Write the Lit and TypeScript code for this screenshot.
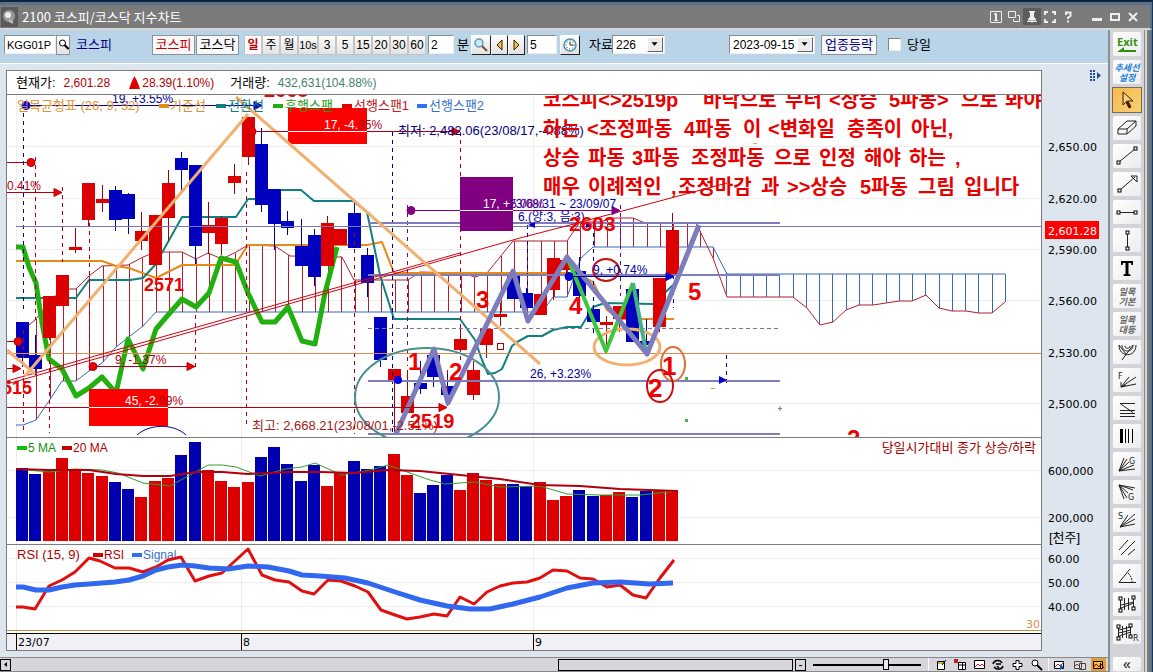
import { LitElement, html, svg, css } from "lit";
import { customElement, state } from "lit/decorators.js";
import { classMap } from "lit/directives/class-map.js";

type Pt = [number, number];
// [up?, body top, body bottom, wick top, wick bottom]
type Candle = [number, number, number, number, number];

const FIRST = 22;
const STEP = 13.27;
const cx = (i: number) => Math.round(FIRST + STEP * i);

const candles: Candle[] = [
  [0, 322, 358, 322, 367], [0, 355, 369, 335, 375], [1, 296, 338, 296, 338], [1, 275, 306, 275, 306],
  [1, 247, 250, 228, 253], [1, 183, 220, 183, 226], [1, 199, 203, 185, 212], [0, 190, 220, 186, 231],
  [0, 194, 219, 193, 234], [1, 231, 241, 212, 250], [1, 215, 265, 215, 265], [1, 183, 218, 170, 241],
  [0, 158, 170, 152, 192], [0, 165, 246, 165, 264], [1, 225, 233, 202, 254], [1, 218, 244, 216, 255],
  [1, 176, 183, 164, 194], [1, 117, 157, 117, 165], [0, 144, 205, 128, 212], [0, 189, 224, 189, 250],
  [0, 221, 228, 211, 235], [0, 246, 266, 219, 266], [0, 235, 277, 229, 286], [1, 223, 266, 216, 266],
  [1, 229, 245, 229, 245], [0, 213, 248, 203, 248], [0, 255, 283, 248, 297], [0, 317, 360, 317, 367],
  [1, 369, 380, 369, 434], [1, 396, 413, 370, 413], [0, 383, 389, 361, 394], [0, 355, 377, 350, 387],
  [0, 386, 395, 373, 404], [1, 339, 350, 327, 350], [1, 370, 395, 361, 400], [1, 329, 345, 329, 358],
  [1, 314, 317, 303, 326], [0, 275, 299, 270, 299], [0, 293, 308, 288, 320], [1, 294, 315, 294, 315],
  [1, 258, 290, 258, 300], [1, 260, 270, 258, 275], [0, 271, 296, 257, 312], [0, 309, 322, 309, 322],
  [1, 322, 325, 316, 353], [1, 306, 319, 306, 332], [0, 289, 342, 289, 342], [0, 341, 345, 319, 345],
  [1, 278, 327, 278, 332], [1, 230, 274, 213, 274],
];

// Top of each volume bar; its colour follows the candle of the same day.
const volumes = [
  468, 474, 470, 458, 469, 473, 476, 482, 489, 497, 481, 478, 455, 442, 470, 481, 487, 482, 457, 447,
  464, 481, 465, 486, 472, 461, 469, 466, 454, 475, 493, 485, 475, 490, 473, 480, 484, 484, 486, 482,
  500, 496, 490, 496, 495, 492, 497, 491, 491, 490,
];

const lagging: Pt[] = [[16, 247], [23, 247], [29, 267], [36, 283], [42, 323], [49, 359], [62, 369], [76, 396], [89, 388], [102, 377], [116, 393], [128, 339], [143, 369], [156, 329], [168, 315], [182, 299], [196, 307], [209, 293], [221, 258], [236, 262], [248, 293], [262, 322], [275, 322], [288, 307], [302, 341], [315, 344], [325, 293], [337, 247]];
const conversion: Pt[] = [[16, 298], [76, 298], [89, 280], [130, 280], [143, 278], [155, 265], [163, 251], [182, 217], [236, 217], [248, 199], [262, 199], [272, 190], [301, 190], [314, 201], [353, 201], [367, 212], [380, 275], [394, 319], [460, 319], [475, 340], [482, 360], [488, 374], [495, 373], [502, 369], [512, 346], [517, 342], [528, 336], [542, 336], [553, 330], [567, 327], [581, 327], [593, 307], [605, 303], [653, 304], [673, 285]];
const base: Pt[] = [[16, 261], [102, 261], [116, 266], [129, 268], [156, 278], [182, 265], [235, 265], [248, 245], [367, 245], [382, 242], [394, 273], [568, 273], [587, 279], [593, 282], [607, 310], [620, 319], [674, 319]];
const spanA: Pt[] = [[29, 325], [35, 320], [48, 304], [62, 289], [76, 289], [89, 276], [102, 266], [128, 265], [143, 257], [156, 252], [182, 252], [196, 259], [208, 253], [222, 259], [236, 252], [248, 245], [275, 246], [290, 256], [342, 257], [354, 280], [408, 280], [420, 272], [462, 273], [475, 277], [487, 273], [500, 257], [513, 241], [567, 241], [580, 222], [600, 222], [613, 218], [633, 218], [645, 223], [696, 223], [713, 258], [727, 297], [793, 297], [807, 308], [820, 325], [833, 322], [846, 310], [859, 305], [873, 305], [899, 301], [912, 301], [926, 295], [939, 308], [952, 311], [966, 311], [979, 313], [992, 313], [1005, 302]];
const spanB: Pt[] = [[16, 425], [23, 425], [36, 420], [49, 401], [62, 381], [76, 381], [89, 371], [102, 363], [116, 347], [143, 326], [156, 312], [542, 312], [553, 297], [567, 297], [581, 258], [593, 247], [713, 247], [727, 274], [1005, 274]];
const wave: Pt[] = [[396, 434], [434, 349], [448, 403], [513, 271], [528, 321], [567, 257], [647, 354], [699, 225]];

const ma20: Pt[] = [[16, 469], [49, 470], [89, 470], [116, 474], [143, 476], [170, 476], [196, 472], [222, 472], [248, 474], [290, 472], [320, 472], [355, 473], [388, 470], [420, 471], [460, 475], [500, 479], [540, 485], [580, 486], [620, 489], [678, 491]];
const ma5: Pt[] = [[16, 469], [49, 472], [75, 469], [102, 470], [118, 473], [143, 483], [170, 486], [190, 475], [208, 465], [222, 465], [236, 467], [260, 476], [285, 469], [302, 467], [315, 463], [342, 475], [370, 470], [388, 465], [410, 473], [430, 480], [445, 484], [475, 482], [500, 487], [540, 486], [567, 494], [600, 495], [640, 495], [678, 491]];
const rsi: Pt[] = [[16, 607], [23, 607], [35, 609], [49, 586], [62, 580], [75, 572], [89, 558], [100, 561], [115, 568], [129, 568], [143, 572], [156, 567], [168, 560], [181, 557], [195, 581], [209, 576], [222, 573], [236, 560], [248, 549], [262, 575], [275, 580], [289, 582], [302, 591], [314, 594], [328, 580], [341, 581], [355, 586], [368, 592], [381, 610], [395, 615], [407, 619], [420, 617], [434, 614], [447, 616], [460, 597], [474, 604], [487, 592], [500, 586], [513, 583], [527, 582], [540, 578], [553, 570], [567, 571], [580, 578], [593, 579], [607, 587], [620, 585], [633, 595], [646, 598], [660, 578], [674, 560]];
const signal: Pt[] = [[16, 587], [23, 587], [36, 590], [49, 590], [62, 587], [75, 585], [89, 584], [115, 582], [129, 580], [143, 576], [156, 570], [168, 567], [182, 565], [195, 566], [209, 568], [228, 569], [248, 566], [268, 567], [289, 571], [302, 575], [320, 576], [345, 578], [368, 583], [395, 592], [420, 600], [447, 606], [470, 609], [490, 609], [513, 604], [540, 597], [567, 588], [593, 583], [620, 582], [650, 584], [673, 583]];

const notes: { y: number; words: [number, string][] }[] = [
  { y: 107, words: [[543, "코스피<>2519p"], [703, "바닥으로"], [785, "부터"], [829, "<상승"], [889, "5파동>"], [961, "으로"], [1005, "봐야"]] },
  { y: 136, words: [[543, "하는"], [587, "<조정파동"], [684, "4파동"], [743, "이"], [768, "<변화일"], [847, "충족이"], [911, "아닌,"]] },
  { y: 165, words: [[543, "상승"], [588, "파동"], [632, "3파동"], [691, "조정파동"], [774, "으로"], [819, "인정"], [864, "해야"], [909, "하는"], [955, ","]] },
  { y: 194, words: [[543, "매우"], [588, "이례적인"], [671, ","], [678, "조정마감"], [761, "과"], [787, ">>상승"], [860, "5파동"], [918, "그림"], [964, "입니다"]] },
];

const marks: [number, number, number, string][] = [
  [264, 97, 20, "2668"], [144, 291, 18, "2571"], [-8, 394, 18, "2515"], [410, 428, 20, "2519"], [569, 231, 21, "2603"],
  [408, 370, 24, "1"], [449, 380, 24, "2"], [476, 308, 24, "3"], [569, 314, 24, "4"], [688, 300, 24, "5"],
  [662, 375, 26, "1"], [648, 397, 26, "2"], [847, 447, 24, "2"],
];

const line = (pts: Pt[]) => pts.map((p) => p.join(",")).join(" ");

function at(pts: Pt[], x: number): number {
  for (let i = 1; i < pts.length; i++) {
    if (x <= pts[i][0]) {
      const [x0, y0] = pts[i - 1];
      const [x1, y1] = pts[i];
      return y0 + ((y1 - y0) * (x - x0)) / (x1 - x0);
    }
  }
  return pts[pts.length - 1][1];
}

const hatch = Array.from({ length: 74 }, (_, k) => cx(k + 1) + 1)
  .filter((x) => x <= 1006)
  .map((x) => ({ x, a: Math.round(at(spanA, x)), b: Math.round(at(spanB, x)) }));

const dash = (x: number, y1: number, y2: number, cls: string) =>
  svg`<line class="dash ${cls}" x1=${x + 0.5} x2=${x + 0.5} y1=${y1} y2=${y2}></line>`;

const ray = (x1: number, x2: number, y: number, cls: string, start: boolean, end: boolean) => svg`
  <g class=${cls}>
    <line x1=${x1} x2=${x2} y1=${y + 0.5} y2=${y + 0.5}></line>
    ${start ? svg`<circle cx=${x1} cy=${y + 0.5} r="4"></circle>` : ""}
    ${end ? svg`<path d="M${x2 + 3} ${y + 0.5}l-8-4v8z"></path>` : ""}
  </g>`;

const k = (d: string) => svg`<path class="k" d=${d}></path>`;
const sq = (x: number, y: number) => svg`<rect class="sq" x=${x - 1.5} y=${y - 1.5} width="3" height="3"></rect>`;

const tools: { name: string; art: unknown }[] = [
  { name: "Exit", art: svg`<text class="exit" x="4" y="14">Exit</text><path fill="#2f9010" d="M4 20l7-5v3h12v2z"></path>` },
  { name: "추세선 설정", art: svg`<text class="tr" x="14" y="11">추세선</text><text class="tr" x="14" y="21">설정</text>` },
  { name: "선택", art: svg`<path d="M10 4v13l3-3 3 6 2-1-3-6h5z" fill="#f8d080" stroke="#3a1a00"></path><path d="M14 12l4 7-2 1-3-6z" fill="#3a1a00"></path>` },
  { name: "지우개", art: svg`${k("M5 13l9-8h9l-9 8zM5 13v5h9v-5M14 18l9-8V5")}` },
  { name: "추세선", art: svg`${k("M6 18L22 5")}${sq(5.5, 18.5)}${sq(22.5, 4.5)}` },
  { name: "화살표", art: svg`${k("M7 18L22 5M18 4h6v6zM18 4l6 6")}${sq(6.5, 18.5)}` },
  { name: "수평선", art: svg`${k("M6 12.5h16")}${sq(5.5, 12.5)}${sq(22.5, 12.5)}` },
  { name: "수직선", art: svg`${k("M14.5 5v15")}${sq(14.5, 4.5)}${sq(14.5, 20.5)}` },
  { name: "문자", art: svg`<path d="M8 5h12v4h-1.500l-.6-2H15.500v11l2 .6V20h-7v-1.400l2-.6V7h-2.400l-.6 2H8z"></path>` },
  { name: "일목기본", art: svg`<text class="ic" x="14" y="11">일목</text><text class="ic" x="14" y="21">기본</text>` },
  { name: "일목대등", art: svg`<text class="ic" x="14" y="11">일목</text><text class="ic" x="14" y="21">대등</text>` },
  { name: "피보나치 원", art: svg`${k("M9 20L20 5M6 5c0 13 17 13 17 0M9 5c0 8 11 8 11 0M12 6c0 3 5 3 5 0M6 5l7 9")}` },
  { name: "피보나치 팬", art: svg`${k("M8 19L16 9M8 19l15-10M8 19l15-3M8 19v-5M8 19l5-2")}<text class="lt" x="5" y="11">F</text>` },
  { name: "되돌림", art: svg`${k("M7 7.500h15M7 7.500l13 9M7 14.500h15M7 17.500h15M7 20.500h15")}` },
  { name: "시간대", art: svg`<path d="M7 5h3v14H7zM12 5h1v14h-1zM15 5h1v14h-1zM19 5h1v14h-1z"></path>` },
  { name: "갠 팬 상승", art: svg`${k("M6 19L11 6M6 19l8-12M6 19l10-9M6 19l15-6M6 19l16-2")}<text class="lt" x="16" y="12">G</text>` },
  { name: "갠 팬 하락", art: svg`${k("M6 5l5 14M6 5l8 13M6 5l9 8M6 5l14 5M6 5l16 3")}<text class="lt" x="15" y="20">G</text>` },
  { name: "스피드 라인", art: svg`${k("M7 19L15 7M7 19L22 6M7 19l15-8M7 19l15-3")}<text class="lt" x="5" y="11">S</text>` },
  { name: "평행선", art: svg`${k("M6 14L15 4M8 19L22 5M15 19l7-6")}` },
  { name: "각도", art: svg`${k("M6 18.500h17M6 18.500L17 5")}<path class="k" stroke-dasharray="2 1" d="M15 9c3 3 4 6 4 9"></path>` },
  { name: "채널", art: svg`${k("M7.500 7v11M11.500 6v12M15.500 6v12M20.500 6v10M8 13l13-3M8 16l13-5")}${sq(7.500, 6.500)}${sq(7.500, 18.500)}${sq(20.500, 5.500)}${sq(20.500, 16.500)}` },
  { name: "회귀 채널", art: svg`${k("M5.500 7v11M9.500 6v12M13.500 6v12M17.500 6v10M6 10l12-3M6 13l12-3M6 16l12-4")}${sq(5.500, 6.500)}${sq(5.500, 18.500)}${sq(17.500, 5.500)}${sq(17.500, 16.500)}<text class="lt" x="20" y="21">R</text>` },
];

const periods = ["일", "주", "월", "10s", "3", "5", "15", "20", "30", "60"];

const windowIcons: { name: string; art: unknown; cls: string }[] = [
  { name: "화면번호", cls: "", art: svg`<path fill="none" d="M2.500 2.500h11v11h-11z"></path><path class="f" d="M7 4h2v7h1v1H6v-1h1V6H6V5z"></path>` },
  { name: "복사", cls: "", art: svg`<path fill="none" d="M2.500 2.500h7v6h-7zM11 6.500h2.500v6h-6V10"></path>` },
  { name: "고정", cls: "pin", art: svg`<path class="f" d="M5 2h6v1.500h-1V8l2 2v1.500H4V10l2-2V3.500H5zM3 12h10v1H3zM7.500 11h1v3h-1z"></path>` },
  { name: "전체화면", cls: "", art: svg`<path fill="none" stroke-width="2" d="M3 6V3h3M10 3h3v3M3 10v3h3M10 13h3v-3"></path>` },
  { name: "도움말", cls: "", art: svg`<path fill="none" stroke-width="2" d="M6 6V3.500h4.500V7L8 8.500V10M8 11.500v2"></path>` },
  { name: "최소화", cls: "gap", art: svg`<path class="f" d="M3 9h10v3H3z"></path>` },
  { name: "최대화", cls: "", art: svg`<path fill="none" stroke-width="2" d="M4 5h8v6H4z"></path>` },
  { name: "닫기", cls: "", art: svg`<path fill="none" stroke-width="2" d="M4 4l8 8M12 4l-8 8"></path>` },
];

const bottomIcons: { name: string; cls: string; art: unknown }[] = [
  { name: "저장", cls: "", art: svg`<path fill="#fff" stroke="#000" d="M3.500 3.500h7v8h-7z"></path><path d="M4 4h6v2H4z" fill="#c8b030"></path><path stroke="#000" d="M8 7l4-5"></path>` },
  { name: "불러오기", cls: "", art: svg`<path fill="#fff" stroke="#000" d="M5.500 4.500h7v7h-7zM5 7h7M9.500 5v6"></path><path d="M1 1h4v4H1z" fill="#c02020"></path>` },
  { name: "차트", cls: "", art: svg`<path fill="#fff" stroke="#000" d="M2.500 2.500h10v8h-10z"></path><path fill="none" stroke="#c02020" d="M3 9l3-3 2 2 2-2 2 2"></path>` },
  { name: "새로고침", cls: "", art: svg`<path fill="none" stroke="#000" stroke-width="1.500" d="M2 6c1-4 7-5 9-1M12 8c-1 4-7 4-9 1M5 6h5M6 8l2 2"></path>` },
  { name: "십자선", cls: "", art: svg`<path fill="#fff" stroke="#000" d="M6 2.500h3v3h3v3H9v3H6v-3H3v-3h3z"></path>` },
  { name: "확대", cls: "", art: svg`<circle cx="6" cy="5" r="3" fill="#fff" stroke="#000"></circle><path stroke="#000" stroke-width="2" d="M8 7l5 5"></path>` },
  { name: "차트 추가", cls: "sep", art: svg`<path fill="#fff" stroke="#000" d="M2.500 3.500h9v7h-9z"></path><path fill="none" stroke="#c02020" d="M3 9l3-3 2 2 3-3"></path><path d="M8 6v6l4-3z" fill="#2050c0"></path>` },
  { name: "차트 복사", cls: "", art: svg`<path fill="#ddd" stroke="#444" d="M2.500 3.500h7v7h-7zM7.500 5.500h6v6h-6z"></path><path fill="none" stroke="#c02020" d="M3 8l2-2 2 2"></path>` },
  { name: "차트 잠금", cls: "on", art: svg`<path fill="#f8c030" stroke="#000" d="M2.500 3.500h9v7h-9z"></path><path fill="none" stroke="#900" d="M2 10l3-4 3 3 2-3 3 4"></path><path stroke="#000" d="M9.500 5v6"></path>` },
];

@customElement("app-root")
export class AppRoot extends LitElement {
  @state() private period = "일";
  @state() private tool = 2;

  static styles = css`
    :host { display: block; --ui: "Liberation Sans", "Noto Sans CJK KR", sans-serif; font: 12px/16px var(--ui); color: #000; }
    * { box-sizing: border-box; }
    button, input, select { font: inherit; color: inherit; margin: 0; padding: 0; border-radius: 0; }
    button { display: flex; align-items: center; justify-content: center; white-space: nowrap; }
    svg { display: block; }
    .window { display: flex; flex-direction: column; min-height: 100vh; background: #dde5ee; border-top: 2px solid #0d2340; border-right: 1px solid #17365a; }
    .title { display: flex; align-items: center; height: 28px; background: #7b7b7b; border-top: 3px solid #5c7189; border-bottom: 2px solid #d8d6d0; border-right: 2px solid #55738c; padding: 0 8px 0 1px; }
    .title h1 { margin: 0; flex: 1; padding-left: 4px; font: 13px/20px "Noto Sans CJK KR", sans-serif; color: #fff; }
    .title button { width: 18px; height: 17px; background: none; border: 0; stroke: #eee; }
    .title .f { fill: #eee; stroke: none; }
    .title .pin { background: #5c5c5c; }
    .title .gap { margin-left: 11px; }
    .body { display: flex; flex: 1; }
    .work { display: flex; flex-direction: column; flex: 1; min-width: 0; }
    .edge { width: 7px; background: linear-gradient(90deg, #d8d8dc 0 2px, #7b7b7b 2px 5px, #55738c 5px); }

    .bar { display: flex; align-items: center; height: 34px; padding: 0 0 4px 4px; background: #b9d4e7; border-bottom: 1px solid #fff; white-space: nowrap; }
    .group { display: flex; align-items: center; }
    .bar input[type="text"] { height: 19px; padding: 0 2px; background: #fff; border: 1px solid #8a8a8a; border-right-color: #eee; border-bottom-color: #eee; }
    .bar button { height: 20px; background: linear-gradient(#fdfdfd, #e2e2e2); border: 1px solid #8d9296; }
    .bar .code { width: 52px; font-size: 11px; }
    .bar .find { width: 14px; }
    .name { width: 82px; padding-left: 6px; font-size: 13px; color: #000080; }
    .bar .mkt { width: 43px; margin-right: 1px; font-size: 13px; background: #f8f8f8; }
    .bar .hot { color: #c00000; }
    .periods { margin-left: 4px; }
    .bar .periods button { width: 18px; border-color: #fff #999 #999 #fff; outline: 1px solid #c4c4c4; outline-offset: -1px; }
    .bar .periods .wide { width: 20px; font-size: 11px; }
    .bar .periods .sel { background: #fff; color: #c00000; font-weight: bold; }
    .minute { width: 26px; margin-left: 2px; }
    .unit { width: 17px; padding-left: 3px; font-size: 13px; }
    .bar .w20 { width: 20px; }
    .bar .w17 { width: 17px; }
    .steps button, .bar .clock { border-color: #fff #222 #222 #fff; }
    .days { width: 30px; margin: 0 3px 0 2px; }
    .data { margin-left: 9px; width: 23px; font-size: 13px; }
    .drop { position: relative; height: 19px; }
    .drop select { width: 100%; height: 19px; padding-left: 3px; appearance: none; background: #fff; border: 1px solid #8a8a8a; border-right-color: #eee; border-bottom-color: #eee; }
    .drop svg { position: absolute; right: 2px; top: 2px; pointer-events: none; background: #ececec; border: 1px solid; border-color: #fff #666 #666 #fff; }
    .count { width: 53px; margin-right: 64px; }
    .date { width: 86px; margin-right: 6px; }
    .bar .rank { width: 56px; font-size: 13px; color: #000080; background: #f8f8f8; }
    .today { display: flex; align-items: center; gap: 6px; margin-left: 11px; font-size: 13px; }
    .today input { appearance: none; width: 13px; height: 13px; background: #fff; border: 1px solid #808080; border-right-color: #eee; border-bottom-color: #eee; }

    .stage { display: grid; grid-template-columns: minmax(0, 1fr) 66px; padding: 6px 0 6px 6px; }
    .panes { background: #fff; border: 1px solid #7b7b7b; }
    .info { display: flex; align-items: center; height: 24px; padding-left: 9px; border-bottom: 1px solid #7b7b7b; white-space: nowrap; }
    .info .cap { font-size: 13px; }
    .info .px { margin: 0 19px 0 8px; color: #b00000; }
    .info .chg { margin: 0 16px 0 2px; color: #b00000; }
    .info .vol { margin-left: 8px; color: #3f7f70; }
    .pane { width: 100%; border-bottom: 1px solid #7b7b7b; }
    .last { border-bottom: 1px solid #000; }
    .months { width: 100%; background: #f1f0f5; }
    .axis { width: 100%; }
    .side { display: block; }
    .more { display: flex; justify-content: flex-end; height: 25px; padding: 0 6px 0 0; }

    .ax { font: 11px "DejaVu Sans", sans-serif; }
    .grid { stroke: #ededed; }
    .up { fill: #dd0000; stroke: none; }
    .dn { fill: #0000bf; stroke: none; }
    .wup { stroke: #a80000; }
    .wdn { stroke: #0000a0; }
    .line { fill: none; stroke-linejoin: round; }
    .dash { stroke-dasharray: 4 4; }
    .red { stroke: #b00010; fill: #f00000; }
    .blue { stroke: #0000a0; fill: #0000e0; }
    .purple { stroke: #800080; fill: #800080; }
    .level { stroke: #7d7dbd; stroke-width: 2; }
    .t { font: 13px var(--ui); }
    .s { font: 12px var(--ui); }
    .leg { font: 13px var(--ui); }
    .lat { font: 12px var(--ui); }
    .big { font: bold 20px "Liberation Sans", "Noto Sans CJK KR", sans-serif; fill: #e80000; }
    .mark { font-family: "Liberation Sans", sans-serif; font-weight: bold; fill: #f00000; }

    .foot { display: flex; align-items: center; height: 15px; margin-top: auto; background: #d6d6dc; border-top: 1px solid #888; border-bottom: 1px solid #888; }
    .foot button { background: none; border: 0; height: 13px; }
    .foot .box { width: 11px; height: 12px; border: 1px solid #000; }
    .track { flex: 1; display: flex; justify-content: flex-end; }
    .thumb { width: 30%; height: 12px; border: 1px solid #000; margin-right: 2px; }
    .zoom { appearance: none; width: 108px; height: 11px; margin: 0 7px; background: linear-gradient(#000, #000) center / 100% 2px no-repeat; }
    .zoom::-webkit-slider-thumb { appearance: none; width: 6px; height: 11px; background: #e8e8ec; border: 1px solid #000; }
    .foot .icon { width: 19px; }
    .icons { display: flex; padding: 0 2px 0 3px; border-left: 1px solid #fff; }
    .foot .sep { margin-left: 2px; width: 22px; border-left: 1px solid #fff; }
    .foot .on { background: #e0a030; width: 15px; margin-left: 2px; }

    .tools { display: flex; flex-direction: column; gap: 4px; width: 37px; padding: 2px 4px 1px 3px; background: #d3d3da; border-left: 2px solid #8d8d95; border-right: 1px solid #888; }
    .tools button { width: 28px; height: 24px; border: 0; border-radius: 2px; background: linear-gradient(135deg, #fff, #ececee); }
    .tools .picked { background: linear-gradient(135deg, #f8b850, #f8d070); outline: 1px solid #7a6a50; border-radius: 0; }
    .tools .fold { height: 14px; margin-top: auto; font-size: 14px; }
    .k { fill: none; stroke: #222; }
    .sq { fill: #fff; stroke: #000; }
    .exit { font: bold 11px "Open Sans", sans-serif; fill: #2f9010; }
    .tr { font: italic bold 9px "Noto Sans CJK KR", sans-serif; fill: #2080d8; text-anchor: middle; }
    .ic { font: italic bold 9px "Noto Sans CJK KR", sans-serif; fill: #666; text-anchor: middle; }
    .lt { font: 8px "DejaVu Sans", sans-serif; fill: #222; }
  `;

  private mainPane() {
    return svg`
      <g transform="translate(-7 -95)">
        ${[146, 198, 249, 300, 403].map((y) => svg`<line class="grid" x1="7" x2="4000" y1=${y + 0.5} y2=${y + 0.5}></line>`)}
        ${[16, 241, 533].map((x) => svg`<line class="grid" x1=${x + 0.5} x2=${x + 0.5} y1="95" y2="437"></line>`)}
        ${hatch.map((h) => svg`<line stroke=${h.x < 722 ? "#b02030" : "#3468b8"} x1=${h.x + 0.5} x2=${h.x + 0.5} y1=${h.a} y2=${h.b}></line>`)}
        <polyline class="line" stroke="#3468b8" points=${line(spanB)}></polyline>
        <polyline class="line" stroke="#b02030" points=${line(spanA)}></polyline>
        <polyline class="line" stroke="#e88a18" stroke-width="2" points=${line(base)}></polyline>
        <polyline class="line" stroke="#108080" stroke-width="2" points=${line(conversion)}></polyline>
        <polyline class="line" stroke="#22b010" stroke-width="5" points=${line(lagging)}></polyline>
        <path d="M112 389h8l-3 6z" fill="#2060ff"></path>
        ${candles.map(([up, t, b, h, l], i) => svg`
          <line class=${up ? "wup" : "wdn"} x1=${cx(i) + 0.5} x2=${cx(i) + 0.5} y1=${h} y2=${l}></line>
          <rect class=${up ? "up" : "dn"} x=${cx(i) - 6} y=${t} width="13" height=${b - t}></rect>`)}
        <rect x="497.500" y="343.500" width="6" height="6" fill="#fff" stroke="#b00000"></rect>

        ${dash(23, 105, 312, "blue")}${dash(23, 330, 433, "red")}${dash(35, 157, 320, "red")}${dash(62, 187, 262, "red")}
        ${dash(49, 296, 433, "red")}${dash(89, 215, 371, "red")}${dash(195, 315, 371, "red")}${dash(246, 172, 427, "red")}
        ${dash(354, 233, 434, "red")}${dash(392, 132, 434, "blue")}${dash(407, 205, 366, "purple")}${dash(460, 132, 360, "red")}
        ${dash(447, 370, 408, "red")}
        ${dash(527, 225, 300, "blue")}${dash(593, 225, 335, "blue")}${dash(620, 205, 296, "purple")}${dash(673, 275, 308, "blue")}${dash(726, 355, 386, "blue")}

        <line x1="16" x2="4000" y1="226.500" y2="226.500" stroke="#7878b8"></line>
        <line x1="7" x2="4000" y1="353.500" y2="353.500" stroke="#e08850"></line>
        <line class="level" x1="368" x2="780" y1="223" y2="223"></line>
        <line class="level" x1="368" x2="780" y1="275" y2="275"></line>
        <line class="level" x1="368" x2="780" y1="381" y2="381"></line>
        <line class="level" x1="368" x2="780" y1="434" y2="434"></line>
        <line x1="368" x2="780" y1="328.500" y2="328.500" stroke="#8070a8" stroke-dasharray="4 3"></line>

        <rect x="288" y="108" width="79" height="36" fill="#f00"></rect>
        <rect x="89" y="389" width="79" height="37" fill="#f00"></rect>
        <rect x="460" y="177" width="53" height="54" fill="#800080"></rect>
        <g class="line" stroke="#d00010">
          <path d="M7 381L250 312 460 253M7 384L250 315 460 255 520 238 570 225 727 183"></path>
        </g>
        <g class="line" stroke="#f0b070" stroke-width="3">
          <path d="M25 376L248 114M236 97L540 364M7 350L35 374"></path>
          <ellipse cx="627" cy="347" rx="33" ry="18"></ellipse>
        </g>
        <ellipse cx="427" cy="397" rx="72" ry="49" fill="none" stroke="#4a9090" stroke-width="2"></ellipse>
        <path class="line" stroke="#000090" d="M137 435c12-11 36-12 49 0"></path>
        <circle cx="398" cy="380" r="4" fill="#0000e0"></circle>
        <path class="line" stroke="#3cc83c" stroke-width="4" d="M567 257L606 351 633 283"></path>
        <path class="line" stroke="#48b088" stroke-width="4" d="M633 283L646 352"></path>
        <polyline class="line" stroke="#7d7dbd" stroke-width="5" points=${line(wave)}></polyline>
        <ellipse cx="606" cy="270" rx="13" ry="11" fill="none" stroke="#c81010" stroke-width="2"></ellipse>
        <ellipse cx="673" cy="364" rx="12" ry="17" fill="none" stroke="#e07030" stroke-width="2"></ellipse>
        <ellipse cx="660" cy="386" rx="13" ry="16" fill="none" stroke="#c81010" stroke-width="2"></ellipse>

        ${ray(26, 259, 105, "blue", true, true)}
        ${ray(31, 7, 162, "red", true, false)}
        ${ray(7, 59, 192, "red", false, true)}
        ${ray(18, 7, 341, "red", true, false)}
        ${ray(7, 18, 368, "red", false, true)}
        ${ray(93, 192, 366, "red", true, true)}
        ${ray(7, 444, 407, "red", false, true)}
        ${ray(252, 457, 131, "red", true, true)}
        ${ray(411, 617, 210, "purple", true, true)}
        ${ray(569, 671, 276, "blue", true, true)}
        <path d="M528 225l7-3v6zM593 225l-7-3v6zM727 380l-8-4v8z" fill="#0000d0"></path>
        <path stroke="#fff" d="M288 131.500h79M89 407.500h79M460 210.500h53"></path>

        <g class="leg">
          <text x="17" y="110" fill="#e09030">일목균형표 (26, 9, 52)</text>
          <rect x="159" y="104" width="10" height="4" fill="#e88a18"></rect><text x="170" y="110" fill="#e09030">기준선</text>
          <rect x="216" y="104" width="10" height="4" fill="#108080"></rect><text x="228" y="110" fill="#108080">전환선</text>
          <rect x="273" y="104" width="10" height="4" fill="#22b010"></rect><text x="285" y="110" fill="#22a010">후행스팬</text>
          <rect x="342" y="104" width="10" height="4" fill="#e00000"></rect><text x="354" y="110" fill="#c02020">선행스팬1</text>
          <rect x="417" y="104" width="10" height="4" fill="#3070ff"></rect><text x="429" y="110" fill="#3870c8">선행스팬2</text>
        </g>
        <g class="t">
          <text x="252" y="430" fill="#a02020">최고: 2,668.21(23/08/01,-2.51%)</text>
          <text x="398" y="135" fill="#000080">최저: 2,482.06(23/08/17,-4.88%)</text>
        </g>
        <g class="s" fill="#0000a0">
          <text x="112" y="103">19, +3.55%</text>
          <text x="530" y="378">26, +3.23%</text>
          <text x="593" y="274">9, +0.74%</text>
          <text x="509" y="208">23/08/31 ~ 23/09/07</text>
          <text x="518" y="221">6.(양:3, 음:3)</text>
        </g>
        <g class="s" fill="#b00010">
          <text x="7" y="190">0.41%</text>
          <text x="115" y="364">9, -1.37%</text>
          <text x="324" y="129"><tspan fill="#fff">17, -4.</tspan><tspan>85%</tspan></text>
          <text x="125" y="405"><tspan fill="#fff">45, -2.</tspan><tspan>99%</tspan></text>
          <text x="483" y="208"><tspan fill="#fff">17, +</tspan><tspan fill="#800080">5.06%</tspan></text>
        </g>
        ${notes.map((n) => svg`<text class="big" y=${n.y}>${n.words.map(([x, w]) => svg`<tspan x=${x}>${w}</tspan>`)}</text>`)}
        ${marks.map(([x, y, s, w]) => svg`<text class="mark" x=${x} y=${y} font-size=${s}>${w}</text>`)}
        <path fill="#40b840" d="M685 419h3v3h-3zM685 377h3v3h-3z"></path>
        <path stroke="#7878b8" d="M778 408.500h4M780 406v5"></path>
        <path stroke="#e0a060" d="M711 388.500h4M753 143.500h4"></path>
      </g>`;
  }

  private volumePane() {
    return svg`
      <g transform="translate(-7 -438)">
        <path class="grid" d="M7 470.500H4000M7 517.500H4000M16.500 438v106M241.500 438v106M533.500 438v106"></path>
        ${volumes.map((t, i) => svg`<rect fill=${candles[i][0] ? "#dd0000" : "#0000b0"} x=${cx(i) - 6} y=${t} width="12" height=${541 - t}></rect>`)}
        <polyline class="line" stroke="#30a030" points=${line(ma5)}></polyline>
        <polyline class="line" stroke="#b00010" stroke-width="2" points=${line(ma20)}></polyline>
        <g class="lat">
          <rect x="17" y="446" width="10" height="4" fill="#10c010"></rect><text x="28" y="452" fill="#109010">5 MA</text>
          <rect x="62" y="446" width="10" height="4" fill="#c00000"></rect><text x="73" y="452" fill="#b00000">20 MA</text>
        </g>
      </g>
      <text class="leg" x="100%" dx="-5" y="14" text-anchor="end" fill="#a00000">당일시가대비 종가 상승/하락</text>`;
  }

  private rsiPane() {
    return svg`
      <g transform="translate(-7 -545)">
        <path class="grid" d="M7 558.500H4000M7 582.500H4000M7 606.500H4000M16.500 545v88M241.500 545v88M533.500 545v88"></path>
        <g class="lat">
          <text x="17" y="559" fill="#b00000" class="leg">RSI (15, 9)</text>
          <rect x="93" y="553" width="10" height="4" fill="#d00000"></rect><text x="104" y="559" fill="#b00000">RSI</text>
          <rect x="132" y="553" width="10" height="4" fill="#3070f0"></rect><text x="143" y="559" fill="#3870c8">Signal</text>
        </g>
        <polyline class="line" stroke="#e01010" stroke-width="3" points=${line(rsi)}></polyline>
        <polyline class="line" stroke="#3068f0" stroke-width="5" points=${line(signal)}></polyline>
        <path stroke="#c09040" d="M7 630.500H4000"></path>
      </g>
      <text class="ax" x="100%" dx="-1" y="83" text-anchor="end" fill="#d09050">30</text>`;
  }

  private axis() {
    const labels: [number, string][] = [[147, "2,650.00"], [199, "2,620.00"], [250, "2,590.00"], [301, "2,560.00"], [353, "2,530.00"], [404, "2,500.00"], [471, "600,000"], [518, "200,000"], [559, "60.00"], [583, "50.00"], [607, "40.00"]];
    return html`<svg class="axis" height="555" role="img" aria-label="축">
      <g transform="translate(-1042 -95)">
        <rect x="1045" y="221" width="54" height="18" fill="#f00"></rect>
        <text class="ax" x="1048" y="235" fill="#fff">2,601.28</text>
        ${labels.map(([y, t]) => svg`<text class="ax" x="1048" y=${y + 4}>${t}</text>`)}
        <text class="leg" x="1049" y="542">[천주]</text>
      </g>
    </svg>`;
  }

  private arrow() {
    return html`<svg width="16" height="15" viewBox="0 0 16 15"><path d="M4 5h7l-3.500 4z"></path></svg>`;
  }

  render() {
    return html`<div class="window">
      <header class="title">
        <svg width="17" height="20" viewBox="0 0 17 20"><rect width="17" height="20" fill="#5a5a5a"></rect><circle cx="8" cy="9" r="6" fill="#999"></circle><circle cx="7" cy="8" r="3" fill="#eee"></circle><path d="M8 12l4 2v3l-4-2z" fill="#bbb"></path></svg>
        <h1>2100 코스피/코스닥 지수차트</h1>
        ${windowIcons.map((w) => html`<button class=${w.cls} aria-label=${w.name}><svg width="16" height="16" viewBox="0 0 16 16">${w.art}</svg></button>`)}
      </header>
      <div class="body">
        <main class="work">
          <div class="bar">
            <div class="group">
              <input class="code" type="text" aria-label="종목코드" .value=${"KGG01P"} />
              <button class="find" aria-label="종목 검색"><svg width="11" height="14" viewBox="0 0 11 14"><circle cx="4.500" cy="5" r="3" fill="#fff" stroke="#000"></circle><path stroke="#000" stroke-width="2" d="M6.500 7l4 4"></path></svg></button>
              <span class="name">코스피</span>
            </div>
            <div class="group"><button class="mkt hot">코스피</button><button class="mkt">코스닥</button></div>
            <div class="group periods">
              ${periods.map((p) => html`<button class=${classMap({ sel: p === this.period, wide: p.length > 2 })} @click=${() => (this.period = p)}>${p}</button>`)}
            </div>
            <input id="min" class="minute" type="text" .value=${"2"} /><label class="unit" for="min">분</label>
            <div class="group steps">
              <button class="w20" aria-label="조회"><svg width="16" height="16" viewBox="0 0 16 16"><circle cx="6" cy="6" r="4" fill="#cfe8f4" stroke="#5a9ab8" stroke-width="1.500"></circle><path stroke="#705030" stroke-width="2" d="M9 9l5 5"></path></svg></button>
              <button class="w17" aria-label="이전"><svg width="9" height="12" viewBox="0 0 9 12"><path d="M7 1v10L2 6z" fill="#f0c840" stroke="#302000"></path></svg></button>
              <button class="w17" aria-label="다음"><svg width="9" height="12" viewBox="0 0 9 12"><path d="M2 1v10l5-5z" fill="#f0c840" stroke="#302000"></path></svg></button>
            </div>
            <input class="days" type="text" aria-label="일수" .value=${"5"} />
            <button class="clock w20" aria-label="시간"><svg width="16" height="16" viewBox="0 0 16 16"><circle cx="8" cy="8" r="6" fill="#fff" stroke="#4a90b0" stroke-width="1.500"></circle><circle cx="8" cy="8" r="4" fill="none" stroke="#222" stroke-dasharray="1 2"></circle><path fill="none" stroke="#222" d="M8 5v3h3"></path></svg></button>
            <label class="data" for="cnt">자료</label>
            <div class="drop count"><select id="cnt"><option>226</option></select>${this.arrow()}</div>
            <div class="drop date"><select aria-label="날짜"><option>2023-09-15</option></select>${this.arrow()}</div>
            <button class="rank">업종등락</button>
            <label class="today"><input type="checkbox" />당일</label>
          </div>
          <div class="stage">
            <div class="panes">
              <div class="info">
                <span class="cap">현재가:</span><span class="px">2,601.28</span>
                <svg width="11" height="13" viewBox="0 0 11 13"><path d="M5.500 0l3 6 2.500 7H0l2.500-7z" fill="#e00000"></path></svg>
                <span class="chg">28.39(1.10%)</span><span class="cap">거래량:</span><span class="vol">432,631(104.88%)</span>
              </div>
              <svg class="pane" height="343" role="img" aria-label="일목균형표">${this.mainPane()}</svg>
              <svg class="pane" height="107" role="img" aria-label="거래량">${this.volumePane()}</svg>
              <svg class="pane last" height="89" role="img" aria-label="RSI">${this.rsiPane()}</svg>
              <svg class="months" height="16" role="img" aria-label="날짜">
                <path stroke="#000" d="M9.500 0v16M234.500 0v16M526.500 0v16"></path>
                <text class="ax" x="11" y="12">23/07</text><text class="ax" x="236" y="12">8</text><text class="ax" x="528" y="12">9</text>
              </svg>
            </div>
            <div class="side">
              <div class="more"><svg width="12" height="11" viewBox="0 0 12 11"><path fill="#205090" d="M0 0h2v2H0zM3 0h2v2H3zM0 3h2v2H0zM3 3h2v2H3zM0 6h2v2H0zM3 6h2v2H3zM0 9h2v2H0zM3 9h2v2H3zM7 2l4 3.500L7 9z"></path></svg></div>
              ${this.axis()}
            </div>
          </div>
          <footer class="foot">
            <button class="box" aria-label="왼쪽으로"><svg width="5" height="7" viewBox="0 0 5 7"><path d="M4 1v5L1 3.500z"></path></svg></button>
            <div class="track"><div class="thumb"></div></div>
            <button class="box" aria-label="축소">-</button>
            <input class="zoom" type="range" aria-label="배율" min="0" max="100" .value=${"69"} />
            <div class="icons">
              ${bottomIcons.map((b) => html`<button class="icon ${b.cls}" aria-label=${b.name}><svg width="15" height="13" viewBox="0 0 15 13">${b.art}</svg></button>`)}
            </div>
          </footer>
        </main>
        <nav class="tools" aria-label="그리기 도구">
          ${tools.map((t, i) => html`<button class=${classMap({ picked: i === this.tool })} aria-label=${t.name} @click=${() => (this.tool = i)}><svg width="28" height="24" viewBox="0 0 28 24">${t.art}</svg></button>`)}
          <button class="fold" aria-label="접기">«</button>
        </nav>
        <div class="edge"></div>
      </div>
    </div>`;
  }
}
